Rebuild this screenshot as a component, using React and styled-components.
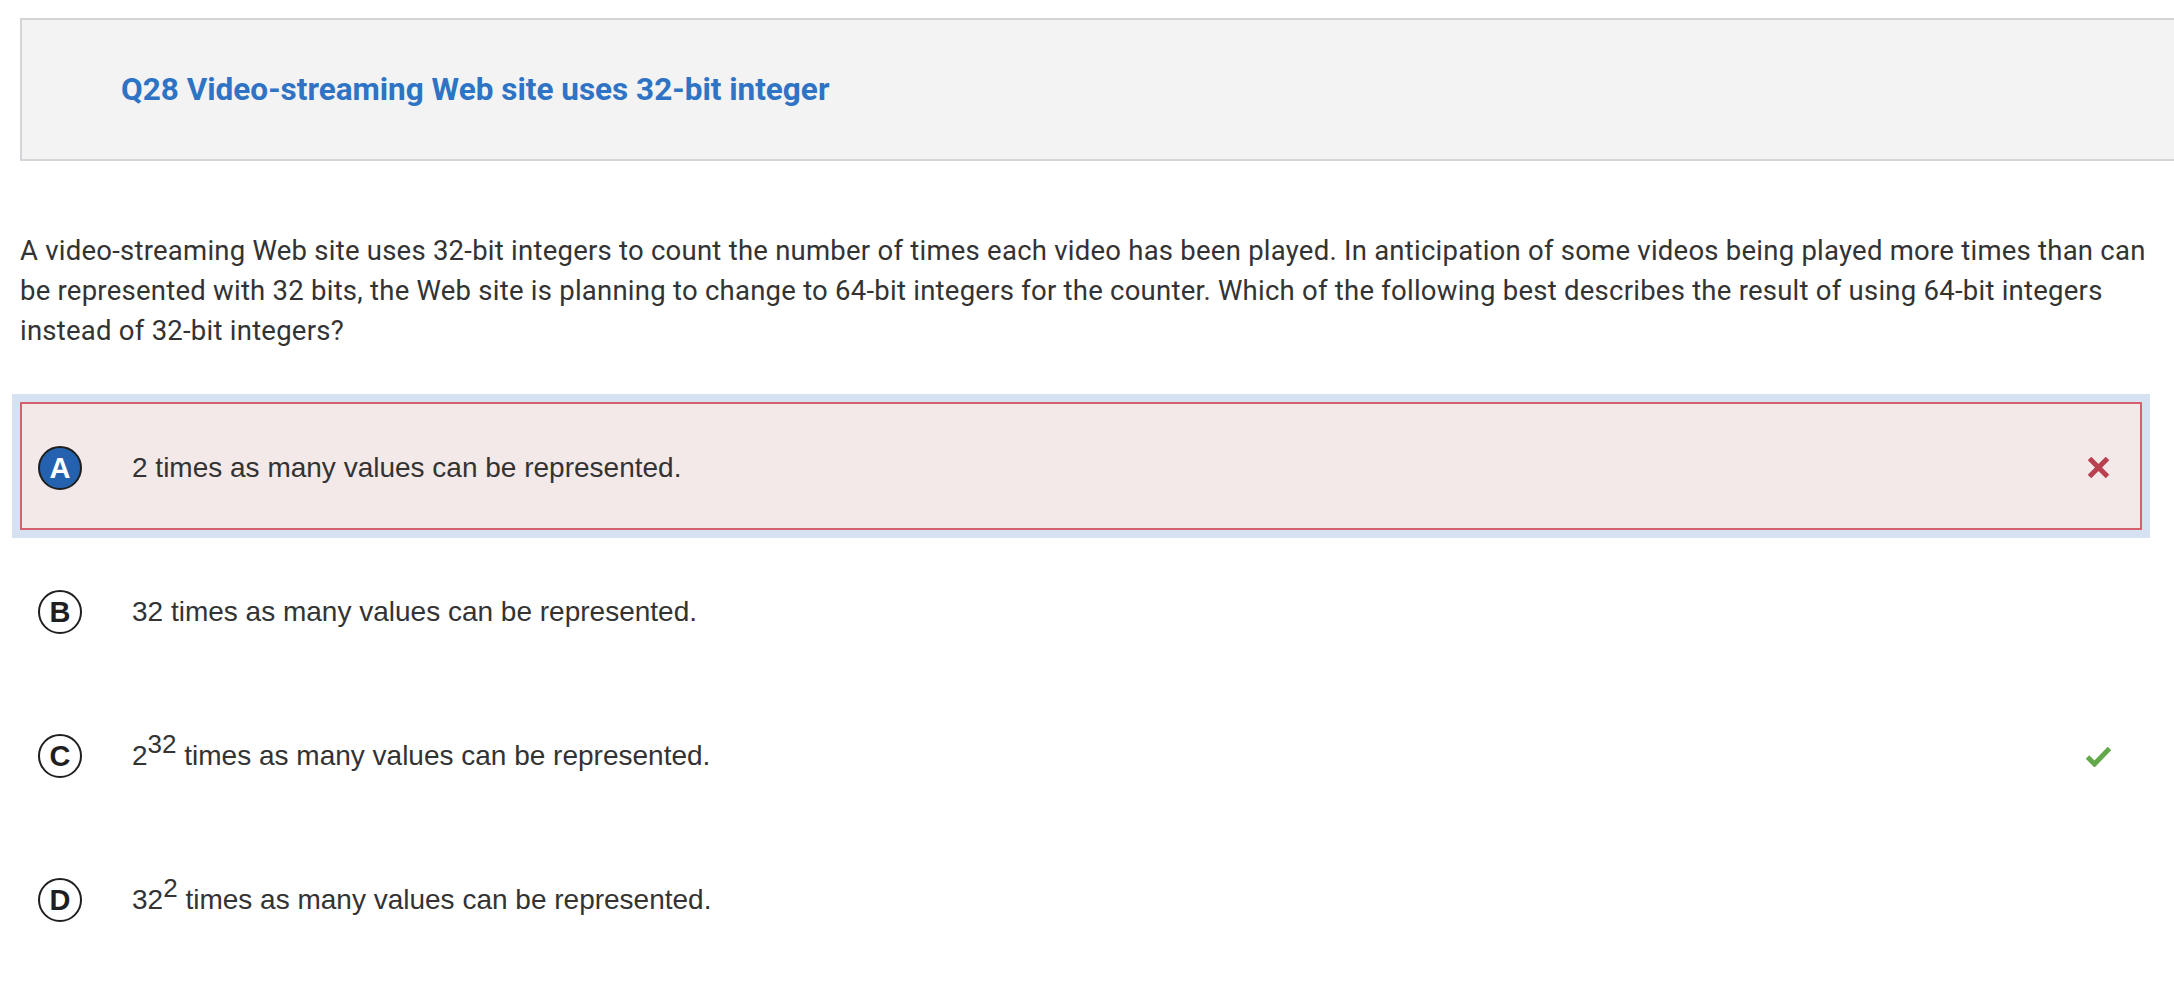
import React from 'react'
import styled, { createGlobalStyle } from 'styled-components'

const GlobalStyle = createGlobalStyle`
  html, body {
    margin: 0;
    padding: 0;
    background: #ffffff;
    overflow: hidden;
  }
`

const Page = styled.div`
  padding: 18px 0 0 20px;
  font-family: Roboto, 'Liberation Sans', sans-serif;
  color: #333333;
`

const Header = styled.div`
  display: flex;
  align-items: center;
  height: 139px;
  padding-left: 98px;
  background: #f3f3f3;
  border: 2px solid #d4d4d9;
  border-right: none;
`

const Title = styled.h1`
  margin: 0 0 0 1px;
  font-size: 31.5px;
  font-weight: 700;
  color: #2e73c4;
`

const Stem = styled.p`
  margin: 70px 0 0;
  width: 2140px;
  font-size: 27.5px;
  letter-spacing: 0.24px;
  line-height: 40px;
`

const Choices = styled.div`
  display: flex;
  flex-direction: column;
  margin-top: 51px;
  width: 2122px;
`

const Choice = styled.div`
  display: flex;
  align-items: center;
  box-sizing: border-box;
  height: 128px;
  margin-bottom: 16px;
  padding: 4px 29px 0 16px;
  border: 2px solid ${(p) => (p.$wrong ? '#d4616b' : 'transparent')};
  background: ${(p) => (p.$wrong ? '#f4e9e9' : 'transparent')};
  outline: ${(p) => (p.$wrong ? '8px solid #d6e2f2' : 'none')};
`

const Letter = styled.span`
  display: flex;
  align-items: center;
  justify-content: center;
  flex: none;
  box-sizing: border-box;
  width: 44px;
  height: 44px;
  border-radius: 50%;
  border: 2px solid #1f1f1f;
  background: ${(p) => (p.$picked ? '#2461ae' : '#ffffff')};
  color: ${(p) => (p.$picked ? '#ffffff' : '#1f1f1f')};
  font-family: 'Liberation Sans', Arial, sans-serif;
  font-weight: 700;
  font-size: 29px;
`

const Answer = styled.span`
  flex: 1;
  margin-left: 50px;
  font-family: 'Liberation Sans', Arial, sans-serif;
  font-size: 28px;
  color: #333333;
`

const Sup = styled.sup`
  font-size: 26px;
  line-height: 0;
  position: relative;
  top: -2px;
`

const Mark = styled.svg`
  flex: none;
  width: 25px;
  height: 22px;
`

function Cross() {
  return (
    <Mark viewBox="0 0 25 22">
      <path d="M3.5 1.5 L21.5 19.5 M21.5 1.5 L3.5 19.5" stroke="#b8404f" strokeWidth="5" fill="none" />
    </Mark>
  )
}

function Tick() {
  return (
    <Mark viewBox="0 0 25 22">
      <path d="M1.5 12 L8.5 19 L23.5 3.5" stroke="#63a84b" strokeWidth="5" fill="none" />
    </Mark>
  )
}

const choices = [
  { key: 'A', text: <>2 times as many values can be represented.</>, picked: true, result: 'wrong' },
  { key: 'B', text: <>32 times as many values can be represented.</> },
  { key: 'C', text: <>2<Sup>32</Sup> times as many values can be represented.</>, result: 'right' },
  { key: 'D', text: <>32<Sup>2</Sup> times as many values can be represented.</> },
]

export default function App() {
  return (
    <Page>
      <GlobalStyle />
      <Header>
        <Title>Q28 Video-streaming Web site uses 32-bit integer</Title>
      </Header>
      <Stem>
        A video-streaming Web site uses 32-bit integers to count the number of times each video has been
        played. In anticipation of some videos being played more times than can be represented with 32 bits,
        the Web site is planning to change to 64-bit integers for the counter. Which of the following best
        describes the result of using 64-bit integers instead of 32-bit integers?
      </Stem>
      <Choices>
        {choices.map((c) => (
          <Choice key={c.key} $wrong={c.result === 'wrong'}>
            <Letter $picked={c.picked}>{c.key}</Letter>
            <Answer>{c.text}</Answer>
            {c.result === 'wrong' && <Cross />}
            {c.result === 'right' && <Tick />}
          </Choice>
        ))}
      </Choices>
    </Page>
  )
}
